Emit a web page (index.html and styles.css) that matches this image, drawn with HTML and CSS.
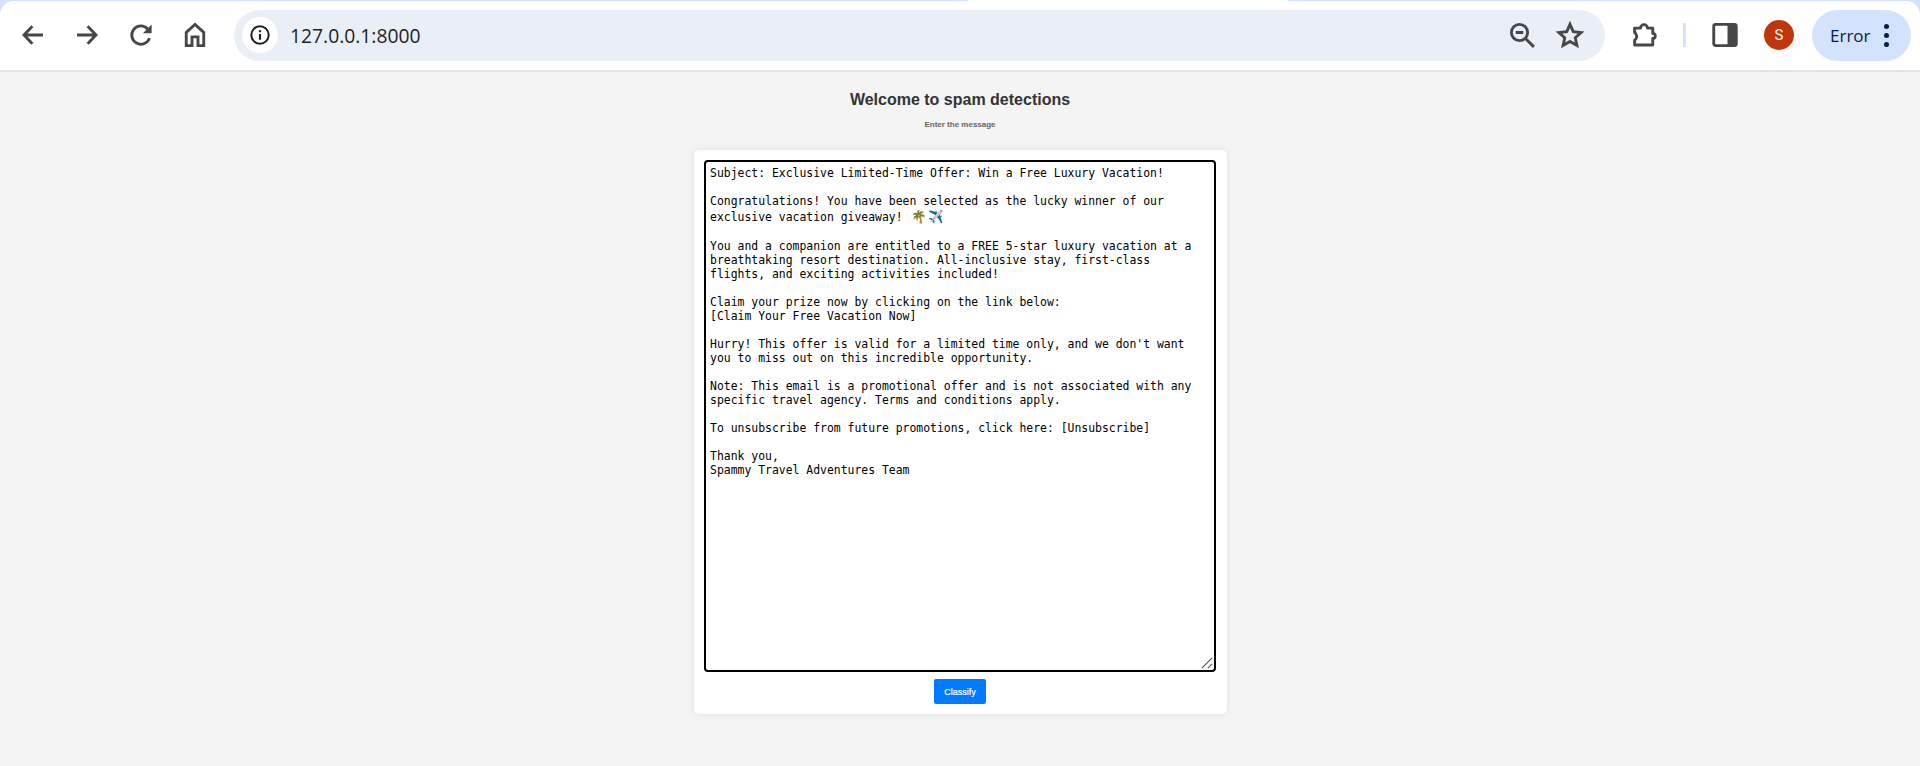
FILE: index.html
```html
<!DOCTYPE html>
<html>
<head>
	<meta charset="UTF-8" />
	<title>Spam detection</title>
	<link rel="stylesheet" href="styles.css">
</head>
<body>
	<div class="chrome">
		<div class="tab-gap"></div>
		<div class="toolbar">
			<div class="nav">
				<svg class="icon" viewBox="0 0 24 24"><path d="M20 12H5M11.500 5 4.800 12l6.700 7"/></svg>
				<svg class="icon" viewBox="0 0 24 24"><path d="M4 12h15M12.500 5l6.700 7-6.700 7"/></svg>
				<svg class="icon" viewBox="0 0 24 24"><path d="M18.800 14.500A7.300 7.300 0 1 1 17.400 7.200L19 9"/><path class="fill" d="M20.500 3.500V10.500h-7z"/></svg>
				<svg class="icon" viewBox="0 0 24 24"><path d="M5 20.500V10l7-6.500 7 6.500v10.500h-4.600V13.500H9.600v7z"/></svg>
			</div>
			<div class="omnibox">
				<div class="site-info">
					<svg viewBox="0 0 24 24" width="22" height="22"><circle cx="12" cy="12" r="9.500" fill="none" stroke="#1f1f1f" stroke-width="2.200"/><path d="M12 10.800v6.400M12 6.800v2.200" stroke="#1f1f1f" stroke-width="2.400"/></svg>
				</div>
				<span class="url">127.0.0.1:8000</span>
				<svg class="icon omni-icon" viewBox="0 0 24 24"><circle cx="10" cy="10" r="6.500"/><path d="M7 10h6M15 15l6.500 6.500"/></svg>
				<svg class="icon omni-icon" viewBox="0 0 24 24"><path d="M12 3.500l2.600 5.800 6.300.7-4.700 4.200 1.300 6.200-5.500-3.200-5.500 3.200 1.300-6.200L3.100 10l6.300-.7z"/></svg>
			</div>
			<svg class="icon ext" viewBox="0 0 24 24"><path d="M4.500 6.500h4.700a2.800 2.800 0 0 1 5.600 0h4.200v4.200a2 2 0 0 1 0 4v5.300H4.500v-3.800a3.700 3.700 0 0 0 0-6.200z" stroke-linejoin="round"/></svg>
			<div class="divider"></div>
			<svg class="icon panel" viewBox="0 0 24 24"><rect x="3" y="3.500" width="18" height="17" rx="1.500"/><rect class="fill" x="14" y="3.500" width="7" height="17"/></svg>
			<div class="avatar">S</div>
			<div class="error-pill">
				<span>Error</span>
				<div class="dots"><i></i><i></i><i></i></div>
			</div>
		</div>
	</div>

	<div class="page">
		<h1 class="title">Welcome to spam detections</h1>
		<p class="subtitle">Enter the message</p>
		<form class="card">
			<div class="message-wrap">
				<div class="message">Subject: Exclusive Limited-Time Offer: Win a Free Luxury Vacation!

Congratulations! You have been selected as the lucky winner of our exclusive vacation giveaway! <span class="emoji">🌴✈️</span>

You and a companion are entitled to a FREE 5-star luxury vacation at a breathtaking resort destination. All-inclusive stay, first-class flights, and exciting activities included!

Claim your prize now by clicking on the link below:
[Claim Your Free Vacation Now]

Hurry! This offer is valid for a limited time only, and we don't want you to miss out on this incredible opportunity.

Note: This email is a promotional offer and is not associated with any specific travel agency. Terms and conditions apply.

To unsubscribe from future promotions, click here: [Unsubscribe]

Thank you,
Spammy Travel Adventures Team</div>
				<svg class="grip" viewBox="0 0 14 14"><path d="M1 13 13 1M8 13l5-5"/></svg>
			</div>
			<button class="classify" type="button">Classify</button>
		</form>
	</div>
</body>
</html>
```

FILE: styles.css
```css
* {
	box-sizing: border-box;
}

html, body {
	height: 100%;
}

body {
	margin: 0;
	background-color: #f4f4f4;
	font-family: "Liberation Sans", Arial, sans-serif;
	overflow: hidden;
}

.chrome {
	position: relative;
	padding-top: 1px;
	background-color: #d3e3fd;
}

.tab-gap {
	position: absolute;
	top: 0;
	left: 968px;
	width: 320px;
	height: 1px;
	background-color: #fff;
}

.toolbar {
	display: flex;
	align-items: center;
	height: 71px;
	padding: 0 8px 1px 18px;
	background-color: #fff;
	border-bottom: 2px solid #e3e3e3;
	border-radius: 14px 14px 0 0;
}

.nav {
	display: flex;
	flex: none;
	gap: 24px;
	width: 202px;
}

.icon {
	display: block;
	flex: none;
	width: 30px;
	height: 30px;
	fill: none;
	stroke: #474747;
	stroke-width: 2.300;
}

.icon .fill {
	fill: #474747;
	stroke: none;
}

.omnibox {
	display: flex;
	align-items: center;
	flex: none;
	width: 1371px;
	height: 51px;
	margin-left: 14px;
	padding-left: 8px;
	padding-right: 20px;
	background-color: #e9eef7;
	border-radius: 26px;
}

.site-info {
	display: flex;
	align-items: center;
	justify-content: center;
	width: 36px;
	height: 36px;
	background-color: #fff;
	border-radius: 50%;
}

.url {
	flex: 1;
	margin-left: 12px;
	font-family: "Open Sans", "Liberation Sans", sans-serif;
	font-size: 19.300px;
	color: #1f1f1f;
}

.omni-icon {
	margin-left: 18px;
}

.ext {
	margin-left: 24px;
}

.divider {
	width: 3px;
	height: 24px;
	margin-left: 24px;
	background-color: #d3e3fd;
}

.panel {
	margin-left: 24px;
}

.avatar {
	display: flex;
	align-items: center;
	justify-content: center;
	flex: none;
	width: 30px;
	height: 30px;
	margin-left: 24px;
	background-color: #bf360c;
	border-radius: 50%;
	color: #fff;
	font-family: "Roboto", sans-serif;
	font-size: 15px;
}

.error-pill {
	display: flex;
	align-items: center;
	flex: none;
	gap: 13px;
	width: 99px;
	height: 51px;
	margin-left: 18px;
	padding-left: 18px;
	background-color: #d3e3fd;
	border-radius: 26px;
	color: #041e49;
	font-family: "Open Sans", sans-serif;
	font-size: 17px;
}

.dots {
	display: flex;
	flex-direction: column;
	gap: 4px;
}

.dots i {
	display: block;
	width: 5px;
	height: 5px;
	background-color: #041e49;
	border-radius: 50%;
}

.page {
	display: flex;
	flex-direction: column;
	align-items: center;
}

.title {
	margin: 18px 0 0;
	font-size: 16px;
	line-height: 20px;
	font-weight: bold;
	color: #333;
}

.subtitle {
	margin: 8px 0 0;
	font-size: 8px;
	line-height: 14px;
	font-weight: bold;
	color: #666;
}

.card {
	display: flex;
	flex-direction: column;
	align-items: center;
	width: 533px;
	height: 564px;
	margin-top: 18px;
	padding: 10px 10px;
	background-color: #fff;
	border-radius: 5px;
	box-shadow: 0 0 6px rgba(0, 0, 0, 0.08);
}

.message-wrap {
	position: relative;
	width: 512px;
	height: 512px;
}

.message {
	width: 100%;
	height: 100%;
	padding: 4px 10px 4px 4px;
	background-color: #fff;
	border: 2px solid #000;
	border-radius: 4px;
	color: #000;
	font-family: "DejaVu Sans Mono", monospace;
	font-size: 11.430px;
	line-height: 14px;
	white-space: pre-wrap;
}

.emoji {
	margin-left: 2px;
	font-size: 12.500px;
	line-height: 17px;
	letter-spacing: 1px;
}

.grip {
	position: absolute;
	right: 3px;
	bottom: 3px;
	width: 12px;
	height: 12px;
	fill: none;
	stroke: #555;
	stroke-width: 1.300;
}

.classify {
	width: 52px;
	height: 25px;
	margin-top: 7px;
	padding: 0;
	background-color: #007bff;
	border: none;
	border-radius: 2px;
	color: #fff;
	font-family: "Liberation Sans", sans-serif;
	font-size: 9px;
	-webkit-text-stroke: 0.2px #fff;
}
```
